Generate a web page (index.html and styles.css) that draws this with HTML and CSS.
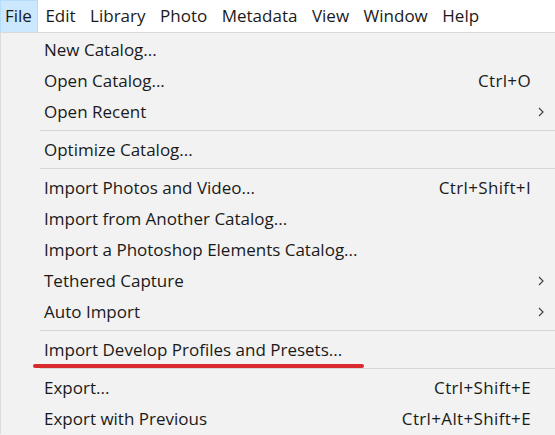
FILE: index.html
```html
<!DOCTYPE html>
<html>
<head>
<meta charset="utf-8">
<link rel="stylesheet" href="styles.css">
</head>
<body>
<div class="menubar">
  <span class="mb-item active">File</span>
  <span class="mb-item">Edit</span>
  <span class="mb-item">Library</span>
  <span class="mb-item">Photo</span>
  <span class="mb-item">Metadata</span>
  <span class="mb-item">View</span>
  <span class="mb-item">Window</span>
  <span class="mb-item">Help</span>
</div>
<div class="menu">
  <div class="item"><span class="label">New Catalog...</span></div>
  <div class="item"><span class="label">Open Catalog...</span><span class="sc">Ctrl+O</span></div>
  <div class="item"><span class="label">Open Recent</span><svg class="arrow" width="6" height="10" viewBox="0 0 6 10"><path d="M1 1l4 4-4 4" fill="none" stroke="#444" stroke-width="1.2"/></svg></div>
  <div class="sep"></div>
  <div class="item"><span class="label">Optimize Catalog...</span></div>
  <div class="sep"></div>
  <div class="item"><span class="label">Import Photos and Video...</span><span class="sc">Ctrl+Shift+I</span></div>
  <div class="item"><span class="label">Import from Another Catalog...</span></div>
  <div class="item"><span class="label">Import a Photoshop Elements Catalog...</span></div>
  <div class="item"><span class="label">Tethered Capture</span><svg class="arrow" width="6" height="10" viewBox="0 0 6 10"><path d="M1 1l4 4-4 4" fill="none" stroke="#444" stroke-width="1.2"/></svg></div>
  <div class="item"><span class="label">Auto Import</span><svg class="arrow" width="6" height="10" viewBox="0 0 6 10"><path d="M1 1l4 4-4 4" fill="none" stroke="#444" stroke-width="1.2"/></svg></div>
  <div class="sep"></div>
  <div class="item"><span class="label">Import Develop Profiles and Presets...</span><span class="redline"></span></div>
  <div class="sep"></div>
  <div class="item"><span class="label">Export...</span><span class="sc">Ctrl+Shift+E</span></div>
  <div class="item"><span class="label">Export with Previous</span><span class="sc">Ctrl+Alt+Shift+E</span></div>
</div>
</body>
</html>
```
FILE: styles.css
```css
html, body {
  margin: 0;
  padding: 0;
  background: #f2f2f2;
  overflow: hidden;
}
body {
  font-family: "Open Sans", "Noto Sans", sans-serif;
  font-size: 17px;
  color: #1a1a1a;
  width: 555px;
  height: 435px;
}
.menubar {
  display: flex;
  height: 32px;
  background: #ffffff;
  border-bottom: 1px solid #d9d9d9;
  align-items: stretch;
}
.mb-item {
  display: flex;
  align-items: center;
  padding: 0 7px 2px 7.5px;
}
.mb-item.active {
  background: #cce8ff;
  border: 1px solid #b5dcfb;
  border-bottom: none;
  padding-left: 4px;
  padding-right: 5px;
}
.menu {
  border-left: 1px solid #dcdcdc;
  background: #f2f2f2;
  padding-top: 1px;
}
.item {
  position: relative;
  display: flex;
  align-items: center;
  height: 31px;
  padding-left: 43px;
  padding-right: 24px;
}
.label {
  flex: 1;
  white-space: nowrap;
}
.sc {
  white-space: nowrap;
  letter-spacing: 0.35px;
}
.arrow {
  position: absolute;
  right: 11px;
  top: 11px;
}
.sep {
  height: 7px;
  margin-left: 39px;
  box-sizing: border-box;
  border-top: 1px solid #d6d6d6;
  position: relative;
  top: 3px;
}
.redline {
  position: absolute;
  left: 32px;
  width: 331px;
  bottom: -3px;
  height: 4px;
  border-radius: 2px;
  background: #d92a2e;
}
```
